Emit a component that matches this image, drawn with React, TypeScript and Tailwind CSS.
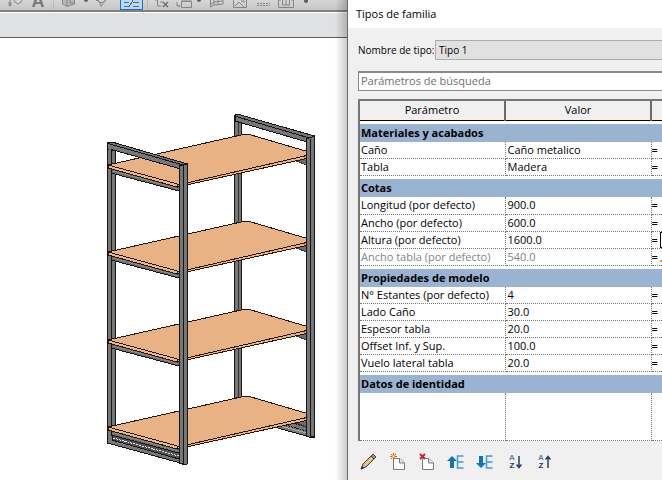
import React from "react";

type Row = { name: string; value: string; muted?: boolean; editing?: boolean };
type Group = { title: string; rows: Row[] };

const groups: Group[] = [
  {
    title: "Materiales y acabados",
    rows: [
      { name: "Caño", value: "Caño metalico" },
      { name: "Tabla", value: "Madera" },
    ],
  },
  {
    title: "Cotas",
    rows: [
      { name: "Longitud (por defecto)", value: "900.0" },
      { name: "Ancho (por defecto)", value: "600.0" },
      { name: "Altura (por defecto)", value: "1600.0", editing: true },
      { name: "Ancho tabla (por defecto)", value: "540.0", muted: true },
    ],
  },
  {
    title: "Propiedades de modelo",
    rows: [
      { name: "N° Estantes (por defecto)", value: "4" },
      { name: "Lado Caño", value: "30.0" },
      { name: "Espesor tabla", value: "20.0" },
      { name: "Offset Inf. y Sup.", value: "100.0" },
      { name: "Vuelo lateral tabla", value: "20.0" },
    ],
  },
  { title: "Datos de identidad", rows: [] },
];

function ToolIcon({ w, children }: { w: number; children: React.ReactNode }) {
  return (
    <svg width={w} height="10" viewBox={`0 0 ${w} 10`} fill="none" stroke="#858585" strokeWidth="1" className="block">
      {children}
    </svg>
  );
}

function Ribbon() {
  return (
    <div className="flex h-[10px] items-start overflow-hidden bg-gradient-to-b from-[#d6d6d6] to-[#c6c6c6] pl-2">
      <button type="button" aria-label="Etiqueta" className="mr-2">
        <ToolIcon w={15}>
          <path d="M2 0v4M0 3h4M6 0l1 2 3 2 3-2 1-2" />
          <circle cx="2" cy="5" r="1" fill="#858585" />
        </ToolIcon>
      </button>
      <button
        type="button"
        className="flex h-[10px] w-[14px] items-start justify-center font-['Liberation_Sans',sans-serif] text-[18px] font-bold leading-[2px] text-[#7b7b7b]"
      >
        A
      </button>
      <span className="mx-2 h-[10px] w-px bg-[#bbbbbb]" />
      <button type="button" aria-label="Vista 3D">
        <ToolIcon w={14}>
          <path d="M.5 0v4L5 6.500 12.500 4V0M5 0v6M8 0v3h4" fill="#b8b8b8" />
        </ToolIcon>
      </button>
      <span className="ml-2 h-[2px] w-1 rounded-b-full bg-[#606060]" />
      <button type="button" aria-label="Sección" className="ml-2">
        <ToolIcon w={14}>
          <path d="M0 .5h2l2 3 1 3 2-3 3-3M2 0l2 2.500h3L9 0" />
        </ToolIcon>
      </button>
      <button type="button" aria-label="Líneas finas" className="ml-[10px] h-[10px] w-[23px] border-x border-b border-[#1c6fc4] bg-[#b8d9f5]">
        <svg width="21" height="9" viewBox="0 0 21 9" stroke="#526b82" strokeWidth="1" shapeRendering="crispEdges">
          <path d="M3 2.500h5M12 2.500h6M3 6.500h5M12 6.500h6M8 7l4-7" />
        </svg>
      </button>
      <span className="mx-1 h-[10px] w-px bg-[#bbbbbb]" />
      <button type="button" aria-label="Cerrar ocultas" className="ml-[3px]">
        <ToolIcon w={15}>
          <path d="M0 0h3M2.500 0v6h4M5 2h3" />
          <path d="M8 2l5 5M13 2l-5 5" stroke="#6f6f6f" strokeWidth="1.500" />
        </ToolIcon>
      </button>
      <button type="button" aria-label="Cambiar ventana" className="ml-[6px]">
        <ToolIcon w={17}>
          <path d="M5.500 1.500h10v6h-10zM5 0h11M1 2v4h3M3 5l1 1-1 1" />
        </ToolIcon>
      </button>
      <span className="ml-1 h-[2px] w-1 rounded-b-full bg-[#606060]" />
      <button type="button" aria-label="Rejilla" className="ml-[9px]">
        <ToolIcon w={14}>
          <path d="M.5 0v7L4 5l9-1V0M4 0v5M8 0v5M1 4l3-2 9-1" />
        </ToolIcon>
      </button>
      <button type="button" aria-label="Imagen" className="ml-2">
        <ToolIcon w={16}>
          <path d="M1.500 0v7.500h13V0M3 6l4-4 2 2 3 3M9 1h3v2" />
        </ToolIcon>
      </button>
      <button type="button" aria-label="Puntos" className="ml-2">
        <ToolIcon w={15}>
          <path d="M1 3.500h13M1 5.500h13" strokeDasharray="2 1" />
        </ToolIcon>
      </button>
      <button type="button" aria-label="Distribución" className="ml-[7px]">
        <ToolIcon w={17}>
          <path d="M3 0H.5v7.500H3M13 0h2.500v7.500H13M4.500 0v5h7V0M8 0v5M3 7.500h10" />
        </ToolIcon>
      </button>
      <span className="ml-[9px] h-[3px] w-1 rounded-b-full bg-[#606060]" />
    </div>
  );
}

function Board({ dy }: { dy: number }) {
  return (
    <g transform={`translate(0 ${dy})`}>
      <path d="M111 167L179 186V191L111 173Z" fill="#6c6c6c" stroke="#151515" />
      <path d="M113 171L179 189" stroke="#8a8a8a" />
      <path d="M296 161L307 158V165Z" fill="#6c6c6c" stroke="#3a3a3a" />
      <path d="M108 165L177 183V187L108 168Z" fill="#f0b780" stroke="#20160e" />
      <path d="M177 184L309 154V158L177 187Z" fill="#efb27b" stroke="#20160e" />
      <path d="M108 165L241 135Q246 133 251 135L309 152V155L182 184Q178 185 174 183Z" fill="#e8b284" stroke="#20160e" />
    </g>
  );
}

function ShelfModel() {
  return (
    <svg width="347" height="442" viewBox="0 38 347 442" fill="none" shapeRendering="crispEdges" role="img" aria-label="Estantería" className="block">
      {/* rear upright, rear top rail and foot rail */}
      <g stroke="#151515">
        <path d="M234.500 115V420H241.500V115Z" fill="#777" />
        <path d="M238 120V420" stroke="#333" />
        <path d="M235 115L239 114.500L314.500 136V145L307 142L235 121Z" fill="#777" />
        <path d="M236 116.500L311 138.500" />
        <path d="M274 427L307 418V431L314 437H310Z" fill="#777" />
        <path d="M280 426L307 433" stroke="#aaa" />
        <path d="M285 425L307 431M292 423L307 427" strokeDasharray="2 1" />
      </g>
      {/* front-left upright and bottom rail */}
      <g stroke="#151515">
        <path d="M107.500 142V443H115.500V142Z" fill="#777" />
        <path d="M111.500 148V440" />
        <path d="M107.500 427L184 448V464L107.500 443Z" fill="#777" />
        <path d="M112 432L179 451V459L112 440Z" fill="#555" />
        <path d="M113 435L179 453M113 438L179 456" stroke="#e0e0e0" strokeDasharray="2 1" />
      </g>
      <Board dy={262} />
      <Board dy={175} />
      <Board dy={87} />
      <Board dy={0} />
      {/* uprights and top rail that stand before the boards */}
      <g stroke="#151515">
        <path d="M306.500 139V436L310 437.500L314.500 436V136Z" fill="#777" />
        <path d="M310.500 139V437" />
        <path d="M107.500 142L112 142L187.500 164V173L179 168.500L115 150.500L107.500 149Z" fill="#777" />
        <path d="M179.500 166V463L184 464.500L187.500 464V164Z" fill="#777" />
        <path d="M183.500 166V464" />
        <path d="M108 143.500L183 165L187 164" />
        <path d="M107.500 142V166" />
      </g>
      {/* faces without an edge between rail and upright */}
      <path d="M180.500 166V168M307.500 139V142M109.500 145V151" stroke="#777" strokeWidth="2" />
    </svg>
  );
}

function Page({ children }: { children: React.ReactNode }) {
  return (
    <svg width="16" height="18" viewBox="0 0 16 18" fill="none">
      <path d="M3.500 5.500H10L14.500 10v6.500h-11z" fill="#fff" stroke="#777b85" />
      <path d="M9.500 5.500V10h5" fill="#e4e6ea" stroke="#777b85" />
      {children}
    </svg>
  );
}

function Sort({ up }: { up?: boolean }) {
  return (
    <span className="flex items-center gap-px">
      <span className="flex flex-col font-['Liberation_Sans',sans-serif] text-[8px] font-bold leading-[8px]">
        <span className="text-[#5f7fae]">A</span>
        <span className="text-[#1f3864]">Z</span>
      </span>
      <svg width="6" height="14" viewBox="0 0 6 14" fill="none" stroke="#243f6b" strokeWidth="1.500">
        {up ? <path d="M3 13V2M.5 4.500L3 1.500l2.500 3" /> : <path d="M3 1v11M.5 9.500L3 12.500l2.500-3" />}
      </svg>
    </span>
  );
}

function Move({ down }: { down?: boolean }) {
  return (
    <svg width="18" height="16" viewBox="0 0 18 16" fill="none">
      {down ? (
        <path d="M3 2h4v7h3l-5 5-5-5h3z" fill="#0f74bd" />
      ) : (
        <path d="M3 14h4V7h3L5 2 0 7h3z" fill="#0f74bd" />
      )}
      <path d="M16.500 2H10.500v12h6M10.500 8h6" stroke="#3f9bd8" strokeWidth="1.500" />
    </svg>
  );
}

function IconButton({ label, children }: { label: string; children: React.ReactNode }) {
  return (
    <button type="button" aria-label={label} className="flex h-5 w-[21px] items-center justify-center">
      {children}
    </button>
  );
}

function ParameterTable() {
  return (
    <div className="overflow-hidden border-l-2 border-t-2 border-[#777777] bg-white">
      <table className="w-full table-fixed border-collapse text-left text-[11px] leading-4">
        <colgroup>
          <col className="w-[145px]" />
          <col className="w-[146px]" />
          <col />
        </colgroup>
        <thead>
          <tr className="h-[19px] bg-[#f0f0f0]">
            <th className="border-b border-r-2 border-b-black border-r-[#6b6b6b] p-0 text-center font-normal">Parámetro</th>
            <th className="border-b border-r-2 border-b-black border-r-[#6b6b6b] p-0 text-center font-normal">Valor</th>
            <th className="border-b border-b-black p-0" aria-label="Fórmula" />
          </tr>
        </thead>
        {groups.map((g) => (
          <tbody key={g.title}>
            <tr className="h-[21px]">
              <th colSpan={3} className="p-0 pt-[3px] font-bold">
                <div className="h-[18px] bg-[#9ab3d1] pl-px leading-[17px]">{g.title}</div>
              </th>
            </tr>
            {g.rows.map((r) => (
              <tr key={r.name} className={r.muted ? "h-[17px] text-[#858585]" : "h-[17px]"}>
                <td className="whitespace-nowrap border-b border-r border-dotted border-[#777777] p-0 pl-px">{r.name}</td>
                <td className="whitespace-nowrap border-b border-r border-dotted border-[#777777] p-0 pl-[2px]">{r.value}</td>
                <td className="border-b border-dotted border-[#777777] p-0 text-black">
                  <div className="flex h-4 items-center overflow-hidden">
                    <span className="w-2 shrink-0 font-semibold">=</span>
                    {r.editing && (
                      <input aria-label="Fórmula de altura" className="h-4 w-10 shrink-0 border border-black bg-white outline-none" />
                    )}
                    {r.muted && <span className="mt-2 size-[2px] shrink-0 bg-[#e0a030]" />}
                  </div>
                </td>
              </tr>
            ))}
          </tbody>
        ))}
        <tbody>
          <tr className="h-[47px]">
            <td className="border-b border-r border-dotted border-[#777777] p-0" />
            <td className="border-b border-r border-dotted border-[#777777] p-0" />
            <td className="border-b border-dotted border-[#777777] p-0" />
          </tr>
        </tbody>
      </table>
    </div>
  );
}

export default function App() {
  return (
    <div className="flex min-h-screen overflow-hidden bg-white font-['Open_Sans','Noto_Sans',sans-serif] text-black">
      <main className="relative min-w-0 flex-1">
        <Ribbon />
        <div className="h-[28px] border-b border-t-2 border-b-[#5e5e5e] border-t-[#808080] bg-[#dfe1e2]">
          <div className="h-px bg-white" />
        </div>
        <ShelfModel />
        <div className="absolute inset-y-0 right-0 w-3 bg-gradient-to-r from-transparent to-black/20" />
      </main>
      <section aria-label="Tipos de familia" className="flex w-[315px] shrink-0 flex-col border-l border-[#6b6b6b] bg-[#f0f0f0]">
        <h1 className="h-[28px] bg-white pl-2 text-[11px] leading-[27px]">Tipos de familia</h1>
        <div className="flex flex-col gap-2 pl-[10px]">
          <div className="mt-3 flex items-center text-[10px]">
            <label htmlFor="type-name" className="w-[77px] shrink-0 whitespace-nowrap">
              Nombre de tipo:
            </label>
            <select
              id="type-name"
              className="h-5 min-w-0 flex-1 appearance-none border border-r-0 border-[#adadad] bg-[#e1e1e1] pl-[3px] text-[10px] leading-4"
            >
              <option>Tipo 1</option>
            </select>
          </div>
          <input
            type="search"
            aria-label="Parámetros de búsqueda"
            placeholder="Parámetros de búsqueda"
            className="mt-[3px] h-5 w-full appearance-none border border-r-0 border-t-2 border-[#8a8a8a] bg-white pb-[3px] pl-[2px] text-[11px] leading-4 outline-none placeholder:text-[#6f6f6f]"
          />
          <ParameterTable />
        </div>
        <div className="flex items-center gap-2 pl-[10px] pt-[11px]">
          <IconButton label="Editar parámetro">
            <svg width="17" height="17" viewBox="0 0 17 17" fill="none">
              <path d="M1 16l2-5L13 1l3 3L6 14z" fill="#d9b77c" stroke="#4a443c" />
              <path d="M11 3l3 3 2-2-3-3z" fill="#a88f91" stroke="#4a443c" />
              <path d="M5 12l7-7" stroke="#f6e3b7" />
              <path d="M1 16l1-3 2 2z" fill="#222" />
            </svg>
          </IconButton>
          <IconButton label="Nuevo parámetro">
            <Page>
              <path d="M3.500 0v7M0 3.500h7M1 1l5 5M6 1L1 6" stroke="#e2512b" />
              <circle cx="3.500" cy="3.500" r="1.500" fill="#ffd34a" />
            </Page>
          </IconButton>
          <IconButton label="Suprimir parámetro">
            <Page>
              <path d="M1 1l5 5M6 1L1 6" stroke="#cc2229" strokeWidth="2" />
            </Page>
          </IconButton>
          <IconButton label="Subir">
            <Move />
          </IconButton>
          <IconButton label="Bajar">
            <Move down />
          </IconButton>
          <div className="flex gap-2 pl-[2px]">
            <IconButton label="Orden ascendente">
              <Sort />
            </IconButton>
            <IconButton label="Orden descendente">
              <Sort up />
            </IconButton>
          </div>
        </div>
      </section>
    </div>
  );
}
